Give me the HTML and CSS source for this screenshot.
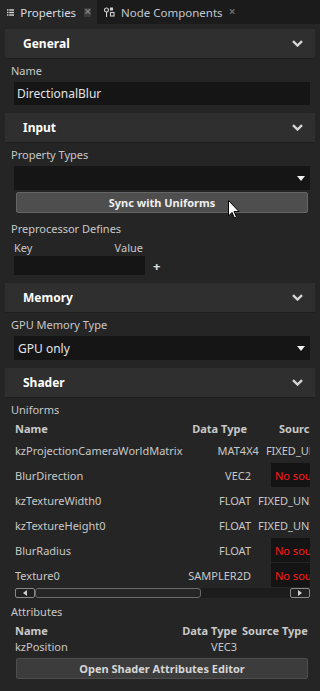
FILE: index.html
```html
<!DOCTYPE html>
<html>
<head>
 <title>Properties</title>
 <link rel="stylesheet" href="styles.css">
</head>
<body>
 <div class="tabs">
 <div class="tab active">
 <svg class="tab-icon" width="10" height="9" viewBox="0 0 10 9"><rect x="0" y="0" width="2" height="2" fill="#d0d0d0"/><rect x="3" y="0" width="7" height="2" fill="#d0d0d0"/><rect x="0" y="3.5" width="2" height="2" fill="#d0d0d0"/><rect x="3" y="3.5" width="7" height="2" fill="#d0d0d0"/><rect x="0" y="7" width="2" height="2" fill="#d0d0d0"/><rect x="3" y="7" width="7" height="2" fill="#d0d0d0"/></svg>
 <span>Properties</span>
 <span class="close boxed">&#215;</span>
 </div>
 <div class="tab">
 <svg class="tab-icon" width="11" height="10" viewBox="0 0 11 10"><circle cx="2.5" cy="3" r="2" fill="none" stroke="#d0d0d0" stroke-width="1.2"/><rect x="2" y="5" width="1.1" height="5" fill="#d0d0d0"/><rect x="6" y="0.5" width="3" height="3" fill="#d0d0d0"/><rect x="6.5" y="5.5" width="3.5" height="3.5" fill="none" stroke="#d0d0d0" stroke-width="1.1"/></svg>
 <span>Node Components</span>
 <span class="close">&#215;</span>
 </div>
 </div>

 <div class="panel">
 <div class="section-head">General <svg class="chev" width="11" height="7" viewBox="0 0 11 7"><path d="M1 1.2 L5.5 5.5 L10 1.2" fill="none" stroke="#d6d6d6" stroke-width="2.4"/></svg></div>
 <div class="label">Name</div>
 <div class="field">DirectionalBlur</div>

 <div class="section-head">Input <svg class="chev" width="11" height="7" viewBox="0 0 11 7"><path d="M1 1.2 L5.5 5.5 L10 1.2" fill="none" stroke="#d6d6d6" stroke-width="2.4"/></svg></div>
 <div class="label">Property Types</div>
 <div class="field select"><span></span><svg width="8" height="5" viewBox="0 0 8 5"><path d="M0 0 H8 L4 5 Z" fill="#f0f0f0"/></svg></div>
 <div class="button hover">Sync with Uniforms</div>
 <div class="label defines">Preprocessor Defines</div>
 <div class="kv-head"><span>Key</span><span>Value</span></div>
 <div class="kv-row"><div class="kv-box"></div><span class="plus">+</span></div>

 <div class="section-head">Memory <svg class="chev" width="11" height="7" viewBox="0 0 11 7"><path d="M1 1.2 L5.5 5.5 L10 1.2" fill="none" stroke="#d6d6d6" stroke-width="2.4"/></svg></div>
 <div class="label">GPU Memory Type</div>
 <div class="field select last"><span>GPU only</span><svg width="8" height="5" viewBox="0 0 8 5"><path d="M0 0 H8 L4 5 Z" fill="#f0f0f0"/></svg></div>

 <div class="section-head">Shader <svg class="chev" width="11" height="7" viewBox="0 0 11 7"><path d="M1 1.2 L5.5 5.5 L10 1.2" fill="none" stroke="#d6d6d6" stroke-width="2.4"/></svg></div>
 <div class="label uni">Uniforms</div>
 <div class="uniforms">
 <div class="urow uhead"><span class="c-name">Name</span><span class="c-type">Data Type</span><span class="c-src">Sourc</span></div>
 <div class="urow"><span class="c-name">kzProjectionCameraWorldMatrix</span><span class="c-type">MAT4X4</span><span class="c-src">FIXED_UNIFORM</span></div>
 <div class="urow"><span class="c-name">BlurDirection</span><span class="c-type">VEC2</span><span class="c-src"><span class="nosrc">No source</span></span></div>
 <div class="urow"><span class="c-name">kzTextureWidth0</span><span class="c-type">FLOAT</span><span class="c-src">FIXED_UNIFORM</span></div>
 <div class="urow"><span class="c-name">kzTextureHeight0</span><span class="c-type">FLOAT</span><span class="c-src">FIXED_UNIFORM</span></div>
 <div class="urow"><span class="c-name">BlurRadius</span><span class="c-type">FLOAT</span><span class="c-src"><span class="nosrc">No source</span></span></div>
 <div class="urow"><span class="c-name">Texture0</span><span class="c-type">SAMPLER2D</span><span class="c-src"><span class="nosrc">No source</span></span></div>
 </div>
 <div class="hscroll">
 <div class="sb-btn"><svg width="6" height="6" viewBox="0 0 6 6"><path d="M5 0 V6 L1 3 Z" fill="#d0d0d0"/></svg></div>
 <div class="sb-thumb"></div>
 <div class="sb-track"></div>
 <div class="sb-btn"><svg width="6" height="6" viewBox="0 0 6 6"><path d="M1 0 V6 L5 3 Z" fill="#d0d0d0"/></svg></div>
 </div>

 <div class="label attrs">Attributes</div>
 <div class="arow ahead"><span class="a-name">Name</span><span class="a-type">Data Type</span><span class="a-src">Source Type</span></div>
 <div class="arow"><span class="a-name">kzPosition</span><span class="a-type">VEC3</span><span class="a-src"></span></div>
 <div class="button editor">Open Shader Attributes Editor</div>
 </div>

 <svg class="cursor" width="12" height="19" viewBox="0 0 12 19"><path d="M0.5 0.5 V16 L4 12.5 L6.5 18 L8.5 17 L6 11.5 H11 Z" fill="#ffffff" stroke="#000000" stroke-width="1"/></svg>
</body>
</html>
```

FILE: styles.css
```css
/* panel styling */
body {
margin: 0;
background-color: #1c1c1c;
font-family: "Noto Sans", "Open Sans", sans-serif;
font-size: 11px;
color: #c8c8c8;
width: 320px;
height: 691px;
overflow: hidden;
position: relative;
}
.tabs {
display: flex;
height: 24px;
background-color: #1b1b1b;
}
.tab {
display: flex;
align-items: center;
padding: 0 6px 0 7px;
color: #c4c8d0;
font-size: 11.5px;
}
.tab.active {
background-color: #262626;
width: 84px;
color: #d8dce4;
}
.tab-icon {
margin-right: 6px;
}
.close {
margin-left: 5px;
width: 9px;
height: 9px;
line-height: 8px;
text-align: center;
color: #6a6a6a;
font-size: 12px;
font-weight: bold;
}
.close.boxed {
margin-left: 8px;
background-color: #3a3a3a;
color: #808080;
}
.panel {
background-color: #252525;
padding: 5px 5px 12px 5px;
height: 662px;
}
.section-head {
display: flex;
align-items: center;
justify-content: space-between;
height: 29px;
padding: 0 12px 0 18px;
background-color: #2f2f2f;
border-bottom: 1px solid #1e1e1e;
color: #ffffff;
font-weight: bold;
font-size: 12px;
}
.label {
height: 18px;
line-height: 18px;
padding: 3px 0 0 6px;
margin-bottom: 2px;
}
.field {
height: 23px;
margin: 0 0 8px 9px;
width: 296px;
background-color: #151515;
color: #e4e4e4;
line-height: 23px;
padding-left: 3px;
box-sizing: border-box;
font-size: 12px;
}
.field.select {
display: flex;
justify-content: space-between;
align-items: center;
height: 24px;
padding: 0 5px 0 4px;
margin-bottom: 2px;
}
.field.select.last {
margin-bottom: 8px;
}
.button {
height: 21px;
margin: 0 7px 0 11px;
background-color: #3c3c3c;
border: 1px solid #4e4e4e;
border-radius: 2px;
box-sizing: border-box;
text-align: center;
line-height: 19px;
font-weight: bold;
color: #d6d6d6;
}
.button.hover {
background-color: #4e4e4e;
border-color: #666666;
color: #f0f0f0;
}
.button.editor {
margin-top: 3px;
}
.label.defines {
padding-top: 7px;
margin-bottom: 0;
}
.kv-head {
display: flex;
justify-content: space-between;
width: 129px;
margin-left: 9px;
height: 18px;
line-height: 20px;
}
.kv-row {
display: flex;
align-items: center;
margin: 0 0 8px 9px;
}
.kv-box {
width: 131px;
height: 19px;
background-color: #151515;
}
.plus {
margin-left: 8px;
font-weight: bold;
font-size: 13px;
color: #e0e0e0;
}
.label.uni {
margin-bottom: 1px;
}
.uniforms {
margin-left: 10px;
width: 295px;
overflow: hidden;
}
.urow {
display: flex;
height: 25px;
line-height: 25px;
white-space: nowrap;
}
.urow.uhead {
height: 18px;
line-height: 18px;
font-weight: bold;
}
.c-name {
flex: 1;
}
.c-type {
width: 90px;
text-align: right;
}
.c-src {
width: 52px;
margin-left: 7px;
overflow: hidden;
}
.uhead .c-type {
padding-right: 4px;
box-sizing: border-box;
}
.uhead .c-src {
padding-left: 21px;
box-sizing: border-box;
}
.nosrc {
display: block;
margin-left: 13px;
height: 24px;
background-color: #141414;
color: #ff1a1a;
padding-left: 4px;
}
.hscroll {
display: flex;
align-items: center;
height: 10px;
margin-left: 10px;
width: 295px;
background-color: #1c1c1c;
}
.sb-btn {
display: flex;
align-items: center;
justify-content: center;
width: 18px;
height: 8px;
border: 1px solid #8a8a8a;
border-radius: 2px;
background-color: #202020;
}
.sb-thumb {
width: 164px;
height: 8px;
border: 1px solid #6a6a6a;
border-radius: 3px;
background-color: #262626;
}
.sb-track {
flex: 1;
}
.label.attrs {
padding-top: 5px;
}
.arow {
display: flex;
height: 16px;
line-height: 16px;
margin-left: 10px;
width: 295px;
white-space: nowrap;
}
.arow.ahead {
font-weight: bold;
}
.a-name {
flex: 1;
}
.a-type {
width: 60px;
text-align: right;
}
.a-src {
width: 68px;
margin-left: 5px;
}
.cursor {
position: absolute;
left: 228px;
top: 200px;
}
```
